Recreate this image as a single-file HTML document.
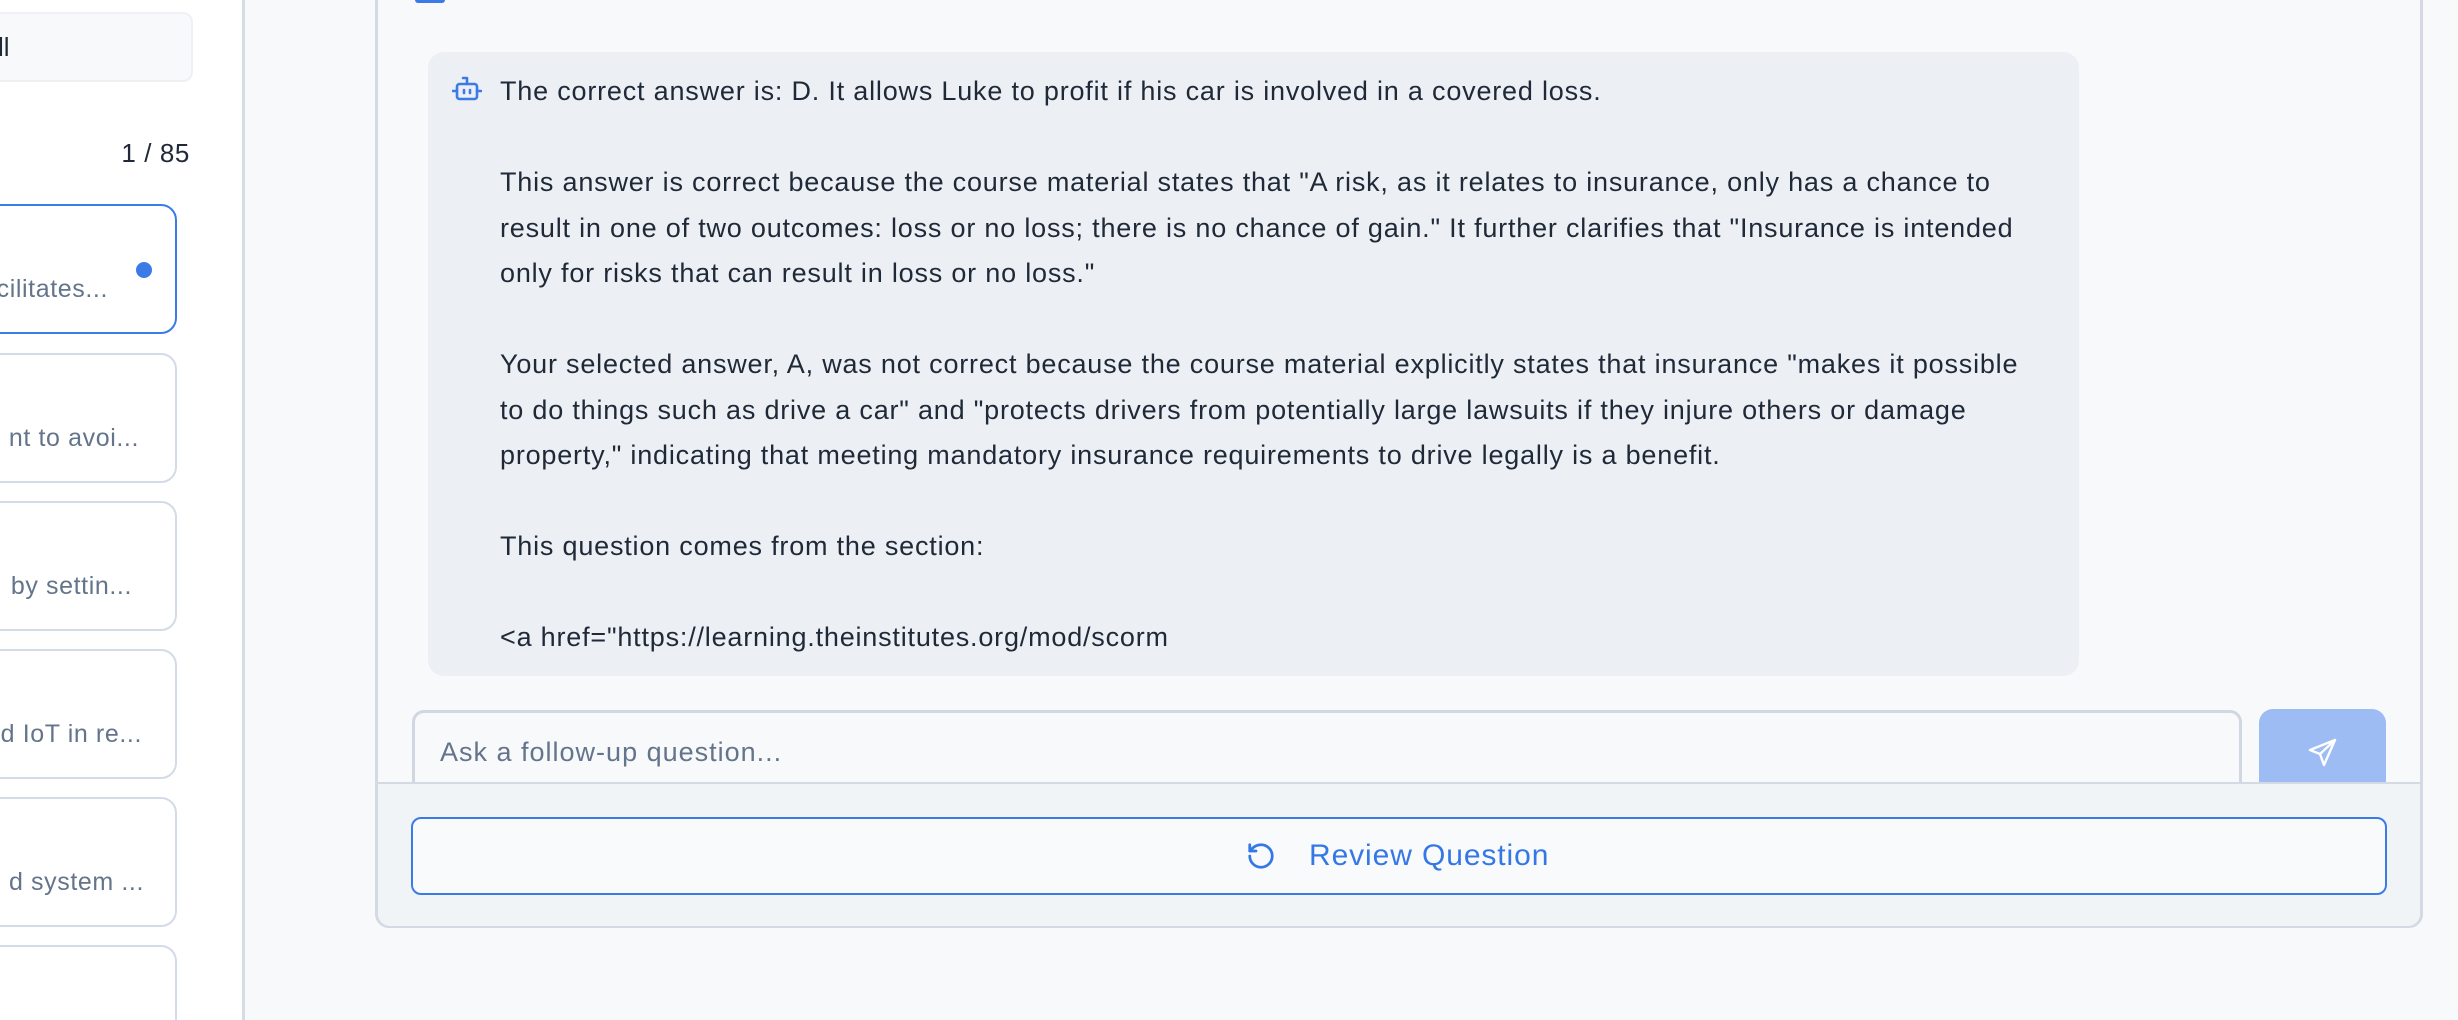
<!DOCTYPE html>
<html><head><meta charset="utf-8"><style>
*{margin:0;padding:0;box-sizing:border-box}
html,body{width:2458px;height:1020px;overflow:hidden}
body{background:#f8f9fb;font-family:"Liberation Sans",sans-serif;position:relative}
.side{position:absolute;left:0;top:0;width:245px;height:1020px;background:#fff;border-right:3px solid #d5dce5;overflow:hidden}
.search{position:absolute;left:-20px;top:12px;width:213px;height:70px;background:#f8f9fb;border:2px solid #eef0f3;border-radius:10px}
.search span{position:absolute;left:16px;top:18px;font-size:26px;color:#1f2937}
.count{position:absolute;right:52px;top:138px;font-size:26px;color:#1f2937;letter-spacing:0.6px}
.card{position:absolute;left:-30px;width:207px;height:130px;background:#fff;border:2px solid #d3dbe6;border-radius:16px}
.card.act{border-color:#3b7be8}
.card span{position:absolute;top:69px;font-size:25px;color:#64748b;white-space:nowrap;letter-spacing:0.6px}
.dot{position:absolute;left:136px;top:262px;width:16px;height:16px;border-radius:50%;background:#3b7be8}
.main{position:absolute;left:375px;top:-20px;width:2048px;height:948px;background:#f8f9fb;border:3px solid #d3dae3;border-radius:0 0 14px 14px;overflow:hidden}
.bubble{position:absolute;left:428px;top:52px;width:1651px;height:624px;background:#eceff3;border-radius:16px}
.txt{position:absolute;left:500px;top:69px;width:1545px;font-size:27px;letter-spacing:0.8px;line-height:45.5px;color:#1f2937}
.input{position:absolute;left:412px;top:710px;width:1830px;height:72px;border:3px solid #d1d7e0;border-bottom:none;border-radius:12px 12px 0 0;background:#f8f9fb}
.input span{position:absolute;left:25px;top:24px;font-size:27px;letter-spacing:1px;color:#64748b}
.send{position:absolute;left:2259px;top:709px;width:127px;height:73px;background:#9dbcf3;border-radius:14px 14px 0 0}
.foot{position:absolute;left:378px;top:782px;width:2042px;height:144px;background:#f1f4f7;border-top:2px solid #d3dae3;border-radius:0 0 12px 12px}
.btn{position:absolute;left:411px;top:817px;width:1976px;height:78px;border:2px solid #3b7be8;border-radius:10px;background:#f8fafc}
.btn span{position:absolute;left:896px;top:20px;font-size:30px;letter-spacing:0.9px;color:#3577e5}
.topicon{position:absolute;left:415px;top:0;width:30px;height:3px;background:#3b7be8;border-radius:0 0 4px 4px}
</style></head><body>
<div class="side">
<div class="search"><span>ll</span></div>
<div class="count">1 / 85</div>
<div class="card act" style="top:204px"><span style="right:67px">cilitates...</span></div>
<div class="card" style="top:353px"><span style="right:36px">nt to avoi...</span></div>
<div class="card" style="top:501px"><span style="right:43px">by settin...</span></div>
<div class="card" style="top:649px"><span style="right:33px">d IoT in re...</span></div>
<div class="card" style="top:797px"><span style="right:31px">d system ...</span></div>
<div class="card" style="top:945px;height:75px;border-bottom:none;border-radius:16px 16px 0 0"></div>
<div class="dot"></div>
</div>
<div class="main"></div>
<div class="topicon"></div>
<div class="bubble"></div>
<svg style="position:absolute;left:452px;top:75px" width="30" height="27" viewBox="0 0 30 27" fill="none" stroke="#3b7be8" stroke-width="2.6" stroke-linecap="round" stroke-linejoin="round"><rect x="5" y="9" width="20" height="15" rx="2.5"/><path d="M15 9V3h-4M1 16h4M25 16h4M12 15v3M18 15v3"/></svg>
<div class="txt">The correct answer is: D. It allows Luke to profit if his car is involved in a covered loss.<br><br>This answer is correct because the course material states that "A risk, as it relates to insurance, only has a chance to result in one of two outcomes: loss or no loss; there is no chance of gain." It further clarifies that "Insurance is intended only for risks that can result in loss or no loss."<br><br>Your selected answer, A, was not correct because the course material explicitly states that insurance "makes it possible to do things such as drive a car" and "protects drivers from potentially large lawsuits if they injure others or damage property," indicating that meeting mandatory insurance requirements to drive legally is a benefit.<br><br>This question comes from the section:<br><br>&lt;a href="https://learning.theinstitutes.org/mod/scorm</div>
<div class="input"><span>Ask a follow-up question...</span></div>
<div class="send"><svg style="position:absolute;left:48px;top:28px" width="32" height="32" viewBox="0 0 32 32" fill="none" stroke="#fff" stroke-width="2.4" stroke-linejoin="round" stroke-linecap="round"><path d="M28 3L3 13l10 4 4 11z"/><path d="M28 3L13 17"/></svg></div>
<div class="foot"></div>
<div class="btn"><svg style="position:absolute;left:833px;top:22px" width="30" height="30" viewBox="0 0 24 24" fill="none" stroke="#3577e5" stroke-width="2.2" stroke-linecap="round" stroke-linejoin="round"><path d="M3 12a9 9 0 1 0 9-9 9.75 9.75 0 0 0-6.74 2.74L3 8"/><path d="M3 3v5h5"/></svg><span>Review Question</span></div>
</body></html>
